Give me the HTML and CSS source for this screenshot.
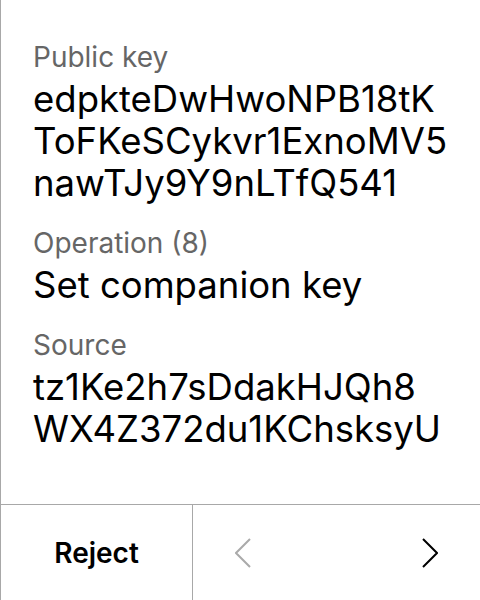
FILE: index.html
```html
<!DOCTYPE html>
<html>
<head>
<meta charset="utf-8">
<link rel="stylesheet" href="styles.css">
</head>
<body>
<div class="screen">
  <main class="content">
    <section class="field">
      <div class="label">Public key</div>
      <div class="value">edpkteDwHwoNPB18tK<br>ToFKeSCykvr1ExnoMV5<br>nawTJy9Y9nLTfQ541</div>
    </section>
    <section class="field">
      <div class="label">Operation (8)</div>
      <div class="value">Set companion key</div>
    </section>
    <section class="field">
      <div class="label">Source</div>
      <div class="value">tz1Ke2h7sDdakHJQh8<br>WX4Z372du1KChsksyU</div>
    </section>
  </main>
  <footer class="footer">
    <div class="reject">Reject</div>
    <div class="nav">
      <svg class="chev" width="16" height="30" viewBox="0 0 16 30"><path d="M15 1 L1 15 L15 29" fill="none" stroke="#aaaaaa" stroke-width="2"/></svg>
      <svg class="chev" width="16" height="30" viewBox="0 0 16 30"><path d="M1 1 L15 15 L1 29" fill="none" stroke="#000" stroke-width="2"/></svg>
    </div>
  </footer>
</div>
</body>
</html>
```
FILE: styles.css
```css
html, body {
  margin: 0;
  padding: 0;
  background: #fff;
}
.screen {
  width: 480px;
  height: 600px;
  box-sizing: border-box;
  border-left: 1px solid #a8a8a8;
  display: flex;
  flex-direction: column;
  font-family: Inter, "Liberation Sans", sans-serif;
  color: #000;
}
.content {
  flex: 1;
  padding: 40px 0 0 32px;
  display: flex;
  flex-direction: column;
  gap: 22px;
}
.field {
  display: flex;
  flex-direction: column;
  gap: 4px;
}
.label {
  font-size: 28px;
  line-height: 34px;
  color: #666;
}
.value {
  font-size: 36.5px;
  line-height: 42px;
  color: #000;
}
.footer {
  height: 96px;
  border-top: 1px solid #a8a8a8;
  display: flex;
  box-sizing: border-box;
}
.reject {
  width: 191px;
  border-right: 1px solid #a8a8a8;
  display: flex;
  align-items: center;
  justify-content: center;
  font-size: 28px;
  font-weight: 600;
}
.nav {
  flex: 1;
  display: flex;
  align-items: center;
  justify-content: space-between;
  padding: 0 42px;
}
.chev { display: block; }
```
